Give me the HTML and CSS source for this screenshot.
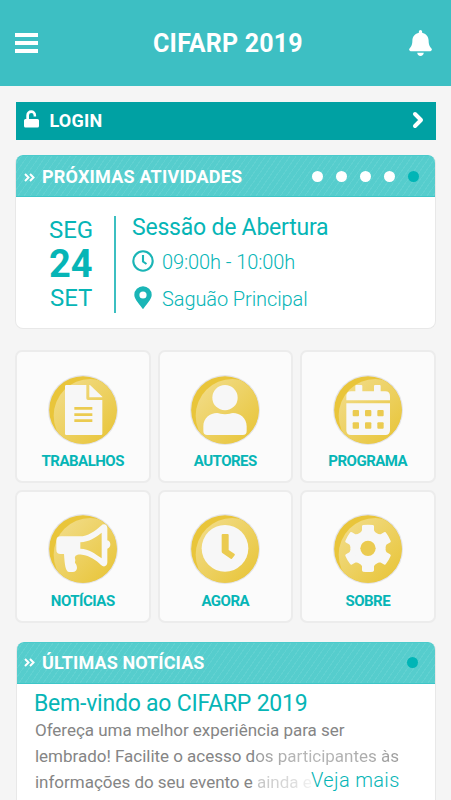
FILE: index.html
```html
<!DOCTYPE html>
<html lang="pt-BR">
<head>
<meta charset="utf-8">
<meta name="viewport" content="width=device-width, initial-scale=1">
<title>CIFARP 2019</title>
<link rel="stylesheet" href="styles.css">
</head>
<body>
<svg class="defs" width="0" height="0" aria-hidden="true">
  <defs>
    <linearGradient id="gloss" x1="0" y1="0" x2="1" y2="1">
      <stop offset="0.1" stop-color="#f1db85"/>
      <stop offset="0.75" stop-color="#e9c740"/>
    </linearGradient>
    <clipPath id="disc"><circle r="101"/></clipPath>
    <g id="medal">
      <circle r="105" fill="#e4e4e6"/>
      <circle r="101.500" fill="#e9c53a"/>
      <circle cx="22" cy="17" r="110" fill="url(#gloss)" clip-path="url(#disc)"/>
    </g>
  </defs>
</svg>
<header class="topbar">
  <svg class="menu" viewBox="0 0 23 20"><path d="M0 0h23v4H0zM0 8h23v4H0zM0 16h23v4H0z"/></svg>
  <h1>CIFARP 2019</h1>
  <svg class="bell" viewBox="0 0 448 512"><path d="M224 512c35.32 0 63.97-28.65 63.97-64H160.03c0 35.35 28.65 64 63.97 64zm215.39-149.71c-19.32-20.76-55.47-51.99-55.47-154.29 0-77.7-54.48-139.9-127.94-155.16V32c0-17.67-14.32-32-31.98-32s-31.98 14.33-31.98 32v20.84C118.56 68.1 64.08 130.3 64.08 208c0 102.3-36.15 133.53-55.47 154.29-6 6.45-8.66 14.16-8.61 21.71.11 16.4 12.98 32 32.1 32h383.8c19.12 0 32-15.6 32.1-32 .05-7.55-2.61-15.27-8.61-21.71z"/></svg>
</header>
<main>
  <a class="login">
    <svg class="lock" viewBox="0 0 15 18"><path d="M2.300 9V5.200a4.900 4.900 0 0 1 9.800 0v1.300H9.600V5.200a2.300 2.300 0 0 0-4.600 0V9H13.500a1.500 1.500 0 0 1 1.500 1.500v5.500a1.500 1.500 0 0 1-1.500 1.500h-12A1.500 1.500 0 0 1 0 16v-5.500A1.500 1.500 0 0 1 1.500 9z"/></svg>
    <span>LOGIN</span>
    <svg class="chevron" viewBox="0 0 12 18"><path d="M3 3l6 6-6 6"/></svg>
  </a>

  <section class="card next">
    <div class="head">
      <svg class="quote" viewBox="0 0 11 9"><path d="M1 1l3.500 3.500L1 8M6 1l3.500 3.500L6 8"/></svg>
      <h2>PRÓXIMAS ATIVIDADES</h2>
      <div class="dots"><i></i><i></i><i></i><i></i><i class="on"></i></div>
    </div>
    <div class="event">
      <div class="date"><span>SEG</span><b>24</b><span>SET</span></div>
      <div class="info">
        <h3>Sessão de Abertura</h3>
        <p class="time"><svg viewBox="0 0 22 22"><circle cx="11" cy="11" r="9.700"/><path d="M11 5v6.500l3.500 2.500"/></svg><span>09:00h - 10:00h</span></p>
        <p class="place"><svg viewBox="0 0 22 24"><path fill-rule="evenodd" d="M11 23.200C8.500 19 2.300 13.500 2.300 8.900a8.700 8.700 0 0 1 17.400 0C19.700 13.500 13.500 19 11 23.200zM11 5.400a3.600 3.600 0 1 0 0 7.200 3.600 3.600 0 0 0 0-7.200z"/></svg><span>Saguão Principal</span></p>
      </div>
    </div>
  </section>

  <nav class="tiles">
    <a><svg viewBox="-105 -105 210 210"><use href="#medal"/>
      <path d="M-50-75H10V-35q0 5 5 5H58V71q0 4-4 4H-50q-4 0-4-4V-71q0-4 4-4z"/><path d="M19-75h2L58-40v2H19z"/>
      <path class="gold" d="M-26-9h54v8h-54zM-26 10h54v8h-54zM-26 28h54v8h-54z"/></svg><span>TRABALHOS</span></a>
    <a><svg viewBox="-105 -105 210 210"><use href="#medal"/>
      <circle cy="-37" r="38"/><path d="M-65 63V49C-65 24-45 9-24 9c7 0 12 4 24 4S17 9 24 9C45 9 65 24 65 49V63q0 12-12 12H-53q-12 0-12-12z"/></svg><span>AUTORES</span></a>
    <a><svg viewBox="-105 -105 210 210"><use href="#medal"/>
      <path d="M-38-56V-72q0-3 3-3h15q3 0 3 3V-56H18V-72q0-3 3-3h14q3 0 3 3V-56H52q14 0 14 14V-29H-65V-42q0-14 14-14zM-65-20H66V61q0 14-14 14H-51q-14 0-14-14z"/>
      <g class="gold"><rect x="-46" y="0" width="19" height="19" rx="3"/><rect x="-9" y="0" width="19" height="19" rx="3"/><rect x="28" y="0" width="19" height="19" rx="3"/><rect x="-46" y="37" width="19" height="19" rx="3"/><rect x="-9" y="37" width="19" height="19" rx="3"/><rect x="28" y="37" width="19" height="19" rx="3"/></g></svg><span>PROGRAMA</span></a>
    <a><svg viewBox="-105 -105 210 210"><use href="#medal"/>
      <path fill-rule="evenodd" d="M-67-38H-10C15-38 36-54 54-70c8-8 19-4 19 8v36c12 2 12 23 0 25v41c0 12-11 16-19 8C40 33 20 20-3 17c-15-2-23 3-21 12 3 8-2 8 1 14 8 10 7 26-8 26h-10C-53 69-55 45-57 15H-67q-13 0-13-13V-25q0-13 13-13zM-8-20V-1C18 0 38 15 56 28V-49C38-34 18-22-8-20z"/></svg><span>NOTÍCIAS</span></a>
    <a><svg viewBox="-105 -105 210 210"><use href="#medal"/>
      <circle cy="-2" r="70"/><path class="gold" d="M-7-45H8q3 0 3 3V3L28 14q3 2 1 5l-7 9q-2 3-5 1L-8 12q-2-2-2-5V-42q0-3 3-3z"/></svg><span>AGORA</span></a>
    <a><svg viewBox="-105 -105 210 210"><use href="#medal"/>
      <g transform="translate(0 -2)"><circle r="53"/><g><path id="tooth" d="M-24-44L-18-54V-66q0-3 3-4Q0-72 15-70q3 1 3 4V-54L24-44zM-24 44L-18 54V66q0 3 3 4Q0 72 15 70q3-1 3-4V54L24 44z"/><use href="#tooth" transform="rotate(60)"/><use href="#tooth" transform="rotate(120)"/></g><circle class="gold" r="23"/></g></svg><span>SOBRE</span></a>
  </nav>

  <section class="card news">
    <div class="head">
      <svg class="quote" viewBox="0 0 11 9"><path d="M1 1l3.500 3.500L1 8M6 1l3.500 3.500L6 8"/></svg>
      <h2>ÚLTIMAS NOTÍCIAS</h2>
      <div class="dots"><i class="on"></i></div>
    </div>
    <div class="article">
      <h3>Bem-vindo ao CIFARP 2019</h3>
      <p>Ofereça uma melhor experiência para ser<br>lembrado! Facilite o acesso d<span class="fade">os participantes às</span><br>informações do seu evento e <span class="fade end">ainda e</span></p>
      <a class="more">Veja mais</a>
    </div>
  </section>
</main>
</body>
</html>
```
FILE: styles.css
```css
* { box-sizing: border-box; }
html, body { height: 800px; overflow: hidden; }
body { margin: 0; background: #f5f5f5; font-family: Roboto, "Liberation Sans", sans-serif; color: #06b5b6; }
h1, h2, h3, p { margin: 0; font-weight: 400; white-space: nowrap; }
svg { display: block; flex: none; }
.defs { position: absolute; }

.topbar { height: 86px; padding: 0 19px 0 15px; display: flex; align-items: center; justify-content: space-between; background: #3dbfc3; color: #fff; }
.topbar h1 { font-size: 25px; font-weight: 700; line-height: 30px; letter-spacing: .2px; padding: 2px 0 0 9px; }
.menu { width: 23px; height: 20px; fill: #fff; }
.bell { width: 23px; height: 26px; fill: #fff; }

main { padding: 15.5px 15px 0; }
.login { height: 38px; margin: 0 .5px 15.5px .5px; padding: 0 12px 0 8px; display: flex; align-items: center; background: #00a1a3; color: #fff; font-size: 18px; font-weight: 700; letter-spacing: .2px; }
.login span { margin: -1px 0 0 11px; flex: 1; }
.lock { width: 15px; height: 18px; margin-top: -3px; fill: #fff; }
.chevron { width: 12px; height: 18px; margin-top: -1px; fill: none; stroke: #fff; stroke-width: 4; stroke-linecap: round; stroke-linejoin: round; }

.card { background: #fff; border: 1px solid #e8e8e8; border-radius: 8px; overflow: hidden; }
.head { height: 42px; display: flex; align-items: center; margin: 0 -1px; padding: 0 16.5px 0 8px; color: #fff; border: 1px solid #3dc6c8; border-top-color: #4bcbcc; border-radius: 7px 7px 0 0; background: repeating-linear-gradient(125deg, #56cdcd 0 4px, #61d1d1 4px 5px); }
.head h2 { font-size: 18px; font-weight: 700; line-height: 22px; margin: 2px 0 0 7px; letter-spacing: .2px; flex: 1; }
.quote { width: 11px; height: 9px; margin-top: 2px; fill: none; stroke: #fff; stroke-width: 2; }
.dots { display: flex; gap: 13px; }
.dots i { width: 11px; height: 11px; border-radius: 50%; background: #fff; }
.dots .on { background: #00b5b6; }

.next { height: 174px; border-top: 0; }
.event { display: flex; padding: 19px 0 0 28px; }
.date { width: 72px; height: 97px; border-right: 2px solid #3cbfc1; display: flex; flex-direction: column; padding-left: 5px; font-size: 24px; letter-spacing: -.1px; }
.date span { line-height: 28px; }
.date span:last-child { padding-left: 1px; }
.date b { font-size: 38px; line-height: 40px; }
.info { padding-left: 16px; }
.info h3 { font-size: 23px; line-height: 24px; letter-spacing: -.22px; }
.info p { display: flex; align-items: center; font-size: 20px; font-weight: 300; letter-spacing: -.1px; }
.info svg { width: 22px; height: 24px; margin-right: 8px; fill: #1ab5b6; }
.info .time { height: 24px; margin-top: 10px; }
.info .time svg { fill: none; stroke: #1ab5b6; stroke-width: 2.1; margin-top: -2px; }
.info .place { height: 24px; margin-top: 13px; }
.place svg { margin-top: -3px; }

.tiles { margin-top: 21px; display: grid; grid-template-columns: repeat(3, 135.5px); grid-auto-rows: 133px; gap: 6.5px 7px; }
.tiles a { display: flex; flex-direction: column; align-items: center; padding-top: 22.5px; background: #fbfbfb; border: 2px solid #ececec; border-radius: 7px; font-size: 15px; font-weight: 700; }
.tiles svg { width: 70px; height: 70px; fill: #f7f7f7; }
.tiles .gold { fill: #ebcb50; }
.tiles span { margin-top: 7.5px; line-height: 18px; letter-spacing: -.5px; }

.news { margin: 19px .5px 0 1px; height: 175px; border-top: 0; }
.news .head { padding: 0 17px 0 7px; }
.news .head h2 { letter-spacing: .1px; margin-top: 0; }
.news .quote { margin-top: 0; }
.article { position: relative; padding: 7px 0 0 17px; }
.article h3 { font-size: 23px; line-height: 26px; letter-spacing: -.22px; }
.article p { margin-left: 1px; font-size: 17px; line-height: 26px; color: #858585; letter-spacing: -.02px; }
.fade { color: transparent; background: linear-gradient(90deg, #999, #b8b8b8 30%, #adadad 75%, #9c9c9c); -webkit-background-clip: text; background-clip: text; }
.fade.end { background-image: linear-gradient(90deg, #c4c4c4, #dedede 70%, #f4f4f4); }
.more { position: absolute; left: 294px; top: 83.5px; font-size: 20px; line-height: 26px; font-weight: 300; letter-spacing: .35px; }
```
